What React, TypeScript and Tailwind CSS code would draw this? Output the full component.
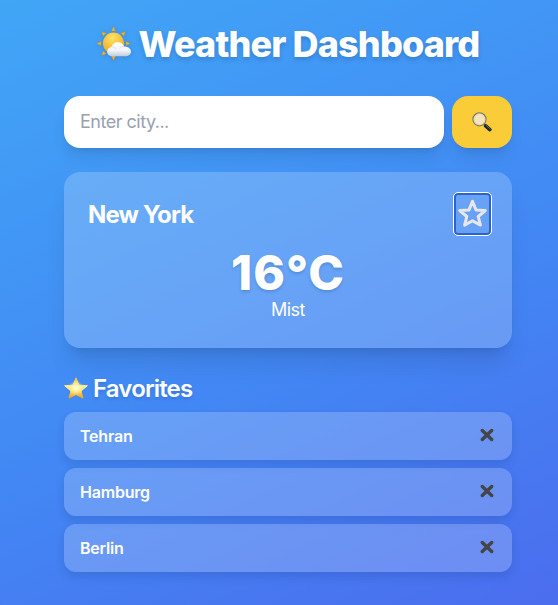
import React from "react";

function SunCloud() {
  return (
    <svg className="-ml-px h-9 w-9 shrink-0 drop-shadow-sm" viewBox="0 0 36 36">
      <defs>
        <radialGradient id="sun" cx=".45" cy=".25" r=".8">
          <stop stopColor="#ffe564" />
          <stop offset="1" stopColor="#f2a01c" />
        </radialGradient>
        <linearGradient id="cloud" x1="0" y1="0" x2="0" y2="1">
          <stop stopColor="#ffffff" />
          <stop offset=".6" stopColor="#f0f3f8" />
          <stop offset="1" stopColor="#bdcbe0" />
        </linearGradient>
      </defs>
      <g fill="#f2b72c" stroke="#c98c31" strokeWidth=".5">
        {[0, 45, 90, 135, 180, 225, 270, 315].map((a) => (
          <path key={a} d="M17.5 .8L15.5 5H19.5Z" transform={`rotate(${a} 17.5 17.5)`} />
        ))}
      </g>
      <circle cx="17.5" cy="17.2" r="10.6" fill="url(#sun)" />
      <path d="M16.4 30.3c-3.1 0-5.2-2-5.200-4.600 0-2.600 1.900-4.500 4.400-4.700.5-2.800 3.300-4.800 6.400-4.800 3 0 5.400 1.600 6.100 4.300 4 .1 6.900 2.100 6.900 5s-2.500 4.800-6 4.800z" fill="url(#cloud)" />
      <path d="M15.600 21c2-.3 3.800.6 4.500 2.100M28.100 20.500c-2.100-.3-3.800.6-4.700 2" fill="none" stroke="#d9e0ea" strokeWidth=".8" />
    </svg>
  );
}

function Magnifier() {
  return (
    <svg className="h-5 w-5" viewBox="0 0 20 20">
      <path d="M11.8 11.8l2 2" stroke="#62665d" strokeWidth="2" />
      <path d="M13.7 13.9l4.1 3.7" stroke="#252928" strokeWidth="3.7" strokeLinecap="round" />
      <path d="M13.8 13.1l4.5 3.9" stroke="#73817b" strokeWidth=".7" />
      <circle cx="7.5" cy="7.3" r="6.500" fill="#f5e5b8" stroke="#77756c" strokeWidth="1.2" />
      <circle cx="7.500" cy="7.300" r="5.600" fill="none" stroke="#d4cbb1" strokeWidth=".7" />
    </svg>
  );
}

function GoldStar() {
  return (
    <svg className="h-6 w-6 shrink-0" viewBox="0 0 24 24">
      <defs>
        <linearGradient id="gold" x1="0" y1="0" x2="0" y2="1">
          <stop stopColor="#f0bd39" />
          <stop offset=".4" stopColor="#ffec91" />
          <stop offset=".6" stopColor="#ffe579" />
          <stop offset="1" stopColor="#f09b13" />
        </linearGradient>
        <radialGradient id="shine" cx=".5" cy=".5" r=".5">
          <stop stopColor="#ffffe8" />
          <stop offset="1" stopColor="#fff3a0" stopOpacity="0" />
        </radialGradient>
      </defs>
      <path d="M12 .8l3 7.300 8.400.6-6.400 5.300 2 7.200-7-3.700-7 3.700 2-7.200L.6 8.700l8.400-.6z" fill="url(#gold)" stroke="url(#gold)" strokeWidth="1" strokeLinejoin="round" />
      <circle cx="12" cy="11" r="7.500" fill="url(#shine)" />
    </svg>
  );
}

const favorites = ["Tehran", "Hamburg", "Berlin"];

export default function App() {
  return (
    <main className="min-h-screen bg-[linear-gradient(155deg,#41a6f6_0%,#4287f4_57%,#4b6dee_100%)] pt-6 pr-[46px] pb-8 pl-16 font-['Inter','Liberation_Sans',sans-serif] text-white">
      <h1 className="mb-8 flex h-10 items-center justify-center gap-[7px] text-4xl font-extrabold tracking-[-0.85px] whitespace-nowrap [text-shadow:0_3px_4px_#19478044]">
        <SunCloud />
        <span>Weather Dashboard</span>
      </h1>
      <form className="mb-6 flex h-[52px] gap-2" onSubmit={(e) => e.preventDefault()}>
        <input className="w-[380px] rounded-2xl bg-white px-4 text-lg tracking-[-0.5px] text-gray-800 shadow-lg outline-none placeholder:text-gray-400" placeholder="Enter city..." />
        <button className="flex w-[60px] items-center justify-center rounded-2xl bg-[#facc37] shadow-lg" aria-label="Search"><Magnifier /></button>
      </form>
      <section className="mb-6 h-44 rounded-2xl bg-white/20 px-6 pt-5 shadow-xl">
        <div className="mb-[13px] flex h-11 items-center justify-between">
          <h2 className="pt-[2px] text-2xl font-bold tracking-[-0.85px]">New York</h2>
          <button className="-mr-[4px] flex h-11 w-[39px] items-center justify-center rounded-[5px] border-[1.5px] border-white shadow-[inset_0_0_0_2px_#2866cb]" aria-label="Add favorite">
            <svg className="h-8 w-8 shrink-0" viewBox="0 0 32 32"><path d="M15.500 3.400l3.500 8.500 9.300.6-7.100 6 2.200 8.600-7.900-4.400-7.900 4.400 2.200-8.600-7.100-6 9.300-.6z" fill="none" stroke="#e7e7e9" strokeWidth="3" strokeLinejoin="round" /></svg>
          </button>
        </div>
        <p className="text-center text-5xl leading-[48px] font-extrabold tracking-[1px] [text-shadow:0_2px_3px_#1f4b8740]">16°C</p>
        <p className="text-center text-lg leading-[26px] tracking-[-0.5px]">Mist</p>
      </section>
      <h2 className="mb-2 flex h-8 items-center gap-[5px] pt-[2px] text-2xl font-semibold tracking-[-0.85px] [text-shadow:0_2px_3px_#1f4b8740]"><GoldStar />Favorites</h2>
      <ul className="flex flex-col gap-2">
        {favorites.map((city) => (
          <li key={city} className="flex h-12 items-center justify-between rounded-xl bg-white/20 pr-[18px] pl-4 font-semibold tracking-[-0.2px] shadow-[0_5px_9px_#1536782a]">
            <span>{city}</span>
            <button aria-label={`Remove ${city}`} className="-mt-[2px]">
              <svg className="h-[14px] w-[14px]" viewBox="0 0 14 14"><path d="M2.3 2.5l9.4 9M11.7 2.5l-9.4 9" stroke="#444548" strokeWidth="3.4" strokeLinecap="round" /></svg>
            </button>
          </li>
        ))}
      </ul>
    </main>
  );
}
